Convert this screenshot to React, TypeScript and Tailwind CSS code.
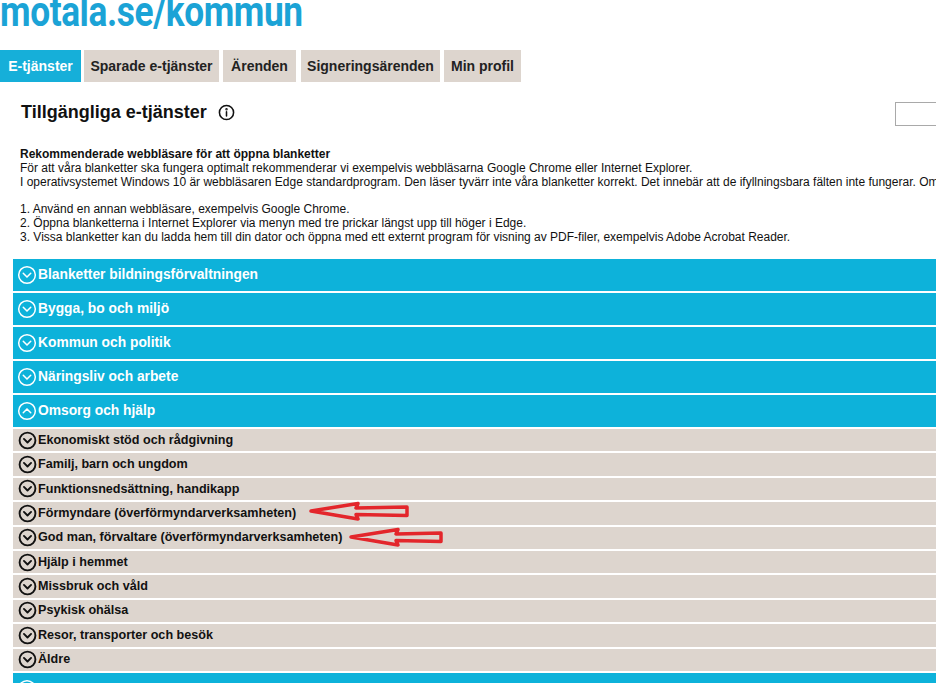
import React from "react";

const CYAN = "bg-[#0db2da]";

function CircleChevron({ up = false, color = "white", size = 20, sw = 1.8 }: { up?: boolean; color?: string; size?: number; sw?: number }) {
  return (
    <svg width={size} height={size} viewBox="0 0 24 24" fill="none" stroke={color} strokeWidth={sw} strokeLinecap="round" strokeLinejoin="round">
      <circle cx="12" cy="12" r="10" />
      {up ? <path d="M7.5 14 12 9.5 16.5 14" /> : <path d="M7.5 10 12 14.5 16.5 10" />}
    </svg>
  );
}

function RedArrow({ width }: { width: number }) {
  const w = width;
  return (
    <svg width={w + 6} height="24" viewBox={`-3 -3 ${w + 6} 24`} fill="none">
      <path
        d={`M1 9 L48 1.5 L46 6 L${w - 1} 5 L${w - 1} 13.5 L46 12.5 L48 17 Z`}
        stroke="#e3262b"
        strokeWidth="3.5"
        strokeLinejoin="round"
      />
    </svg>
  );
}

const headers = [
  "Blanketter bildningsförvaltningen",
  "Bygga, bo och miljö",
  "Kommun och politik",
  "Näringsliv och arbete",
];

const subs = [
  "Ekonomiskt stöd och rådgivning",
  "Familj, barn och ungdom",
  "Funktionsnedsättning, handikapp",
  "Förmyndare (överförmyndarverksamheten)",
  "God man, förvaltare (överförmyndarverksamheten)",
  "Hjälp i hemmet",
  "Missbruk och våld",
  "Psykisk ohälsa",
  "Resor, transporter och besök",
  "Äldre",
];

function HeaderRow({ label, up = false }: { label?: string; up?: boolean }) {
  return (
    <div className={`${CYAN} h-[32px] flex items-center pl-[4px] text-white font-bold text-[13.8px]`}>
      <CircleChevron up={up} />
      {label && <span className="ml-[1px]">{label}</span>}
    </div>
  );
}

function SubRow({ label }: { label: string }) {
  return (
    <div className="bg-[#ddd5ce] h-[22.4px] flex items-center pl-[5px] text-[#111] font-bold text-[12.6px]">
      <CircleChevron color="#111" size={19} sw={2.4} />
      <span className="ml-[1px]">{label}</span>
    </div>
  );
}

export default function App() {
  return (
    <div className="w-[936px] h-[683px] overflow-hidden bg-white relative" style={{ fontFamily: '"Liberation Sans", Arial, sans-serif' }}>
      <div className="w-[1300px]">
        <div
          className="text-[#1ba3d6] font-bold text-[42px] leading-none -mt-[9px] h-[42px] origin-left scale-x-[0.84] whitespace-nowrap tracking-[-0.5px]"
          style={{ fontFamily: "Roboto, sans-serif" }}
        >
          motala.se/kommun
        </div>

        <div className="flex gap-[3px] mt-[17px] h-[32px] text-[14px] font-bold">
          <div className="bg-[#16afd9] text-white flex items-center justify-center w-[81px]">E-tjänster</div>
          <div className="bg-[#ddd5ce] text-[#222] flex items-center justify-center w-[135px]">Sparade e-tjänster</div>
          <div className="bg-[#ddd5ce] text-[#222] flex items-center justify-center w-[73px] ml-[1px]">Ärenden</div>
          <div className="bg-[#ddd5ce] text-[#222] flex items-center justify-center w-[139px] ml-[2px]">Signeringsärenden</div>
          <div className="bg-[#ddd5ce] text-[#222] flex items-center justify-center w-[77px] ml-[1px]">Min profil</div>
        </div>

        <div className="flex items-start mt-[18px] h-[26px]">
          <div className="pl-[21px] flex items-center h-[24px] w-[895px]">
            <span className="text-[18px] font-bold text-[#111]">Tillgängliga e-tjänster</span>
            <svg className="ml-[11px]" width="17" height="17" viewBox="0 0 24 24" fill="none" stroke="#111" strokeWidth="2.2" strokeLinecap="round">
              <circle cx="12" cy="12" r="10" />
              <path d="M12 11v6" />
              <circle cx="12" cy="7.3" r="0.6" fill="#111" />
            </svg>
          </div>
          <div className="mt-[2px] w-[150px] h-[24px] border border-[#a9a9a9]" />
        </div>

        <div className="mt-[22px] pl-[20px] text-[12px] leading-[13.8px] text-[#111] whitespace-nowrap h-[97px]">
          <div className="font-bold">Rekommenderade webbläsare för att öppna blanketter</div>
          <div>För att våra blanketter ska fungera optimalt rekommenderar vi exempelvis webbläsarna Google Chrome eller Internet Explorer.</div>
          <div>I operativsystemet Windows 10 är webbläsaren Edge standardprogram. Den läser tyvärr inte våra blanketter korrekt. Det innebär att de ifyllningsbara fälten inte fungerar. Om du vill använda Edge kan du göra så här:</div>
          <div className="h-[13.8px]" />
          <div>1. Använd en annan webbläsare, exempelvis Google Chrome.</div>
          <div>2. Öppna blanketterna i Internet Explorer via menyn med tre prickar längst upp till höger i Edge.</div>
          <div>3. Vissa blanketter kan du ladda hem till din dator och öppna med ett externt program för visning av PDF-filer, exempelvis Adobe Acrobat Reader.</div>
        </div>

        <div className="ml-[13px] mt-[14px] flex flex-col gap-[2px]">
          {headers.map((h) => (
            <HeaderRow key={h} label={h} />
          ))}
          <HeaderRow label="Omsorg och hjälp" up />
          {subs.map((s) => (
            <SubRow key={s} label={s} />
          ))}
          <HeaderRow />
        </div>
      </div>

      <div className="absolute left-[307px] top-[499px]">
        <RedArrow width={98} />
      </div>
      <div className="absolute left-[347px] top-[525px]">
        <RedArrow width={92} />
      </div>
    </div>
  );
}
